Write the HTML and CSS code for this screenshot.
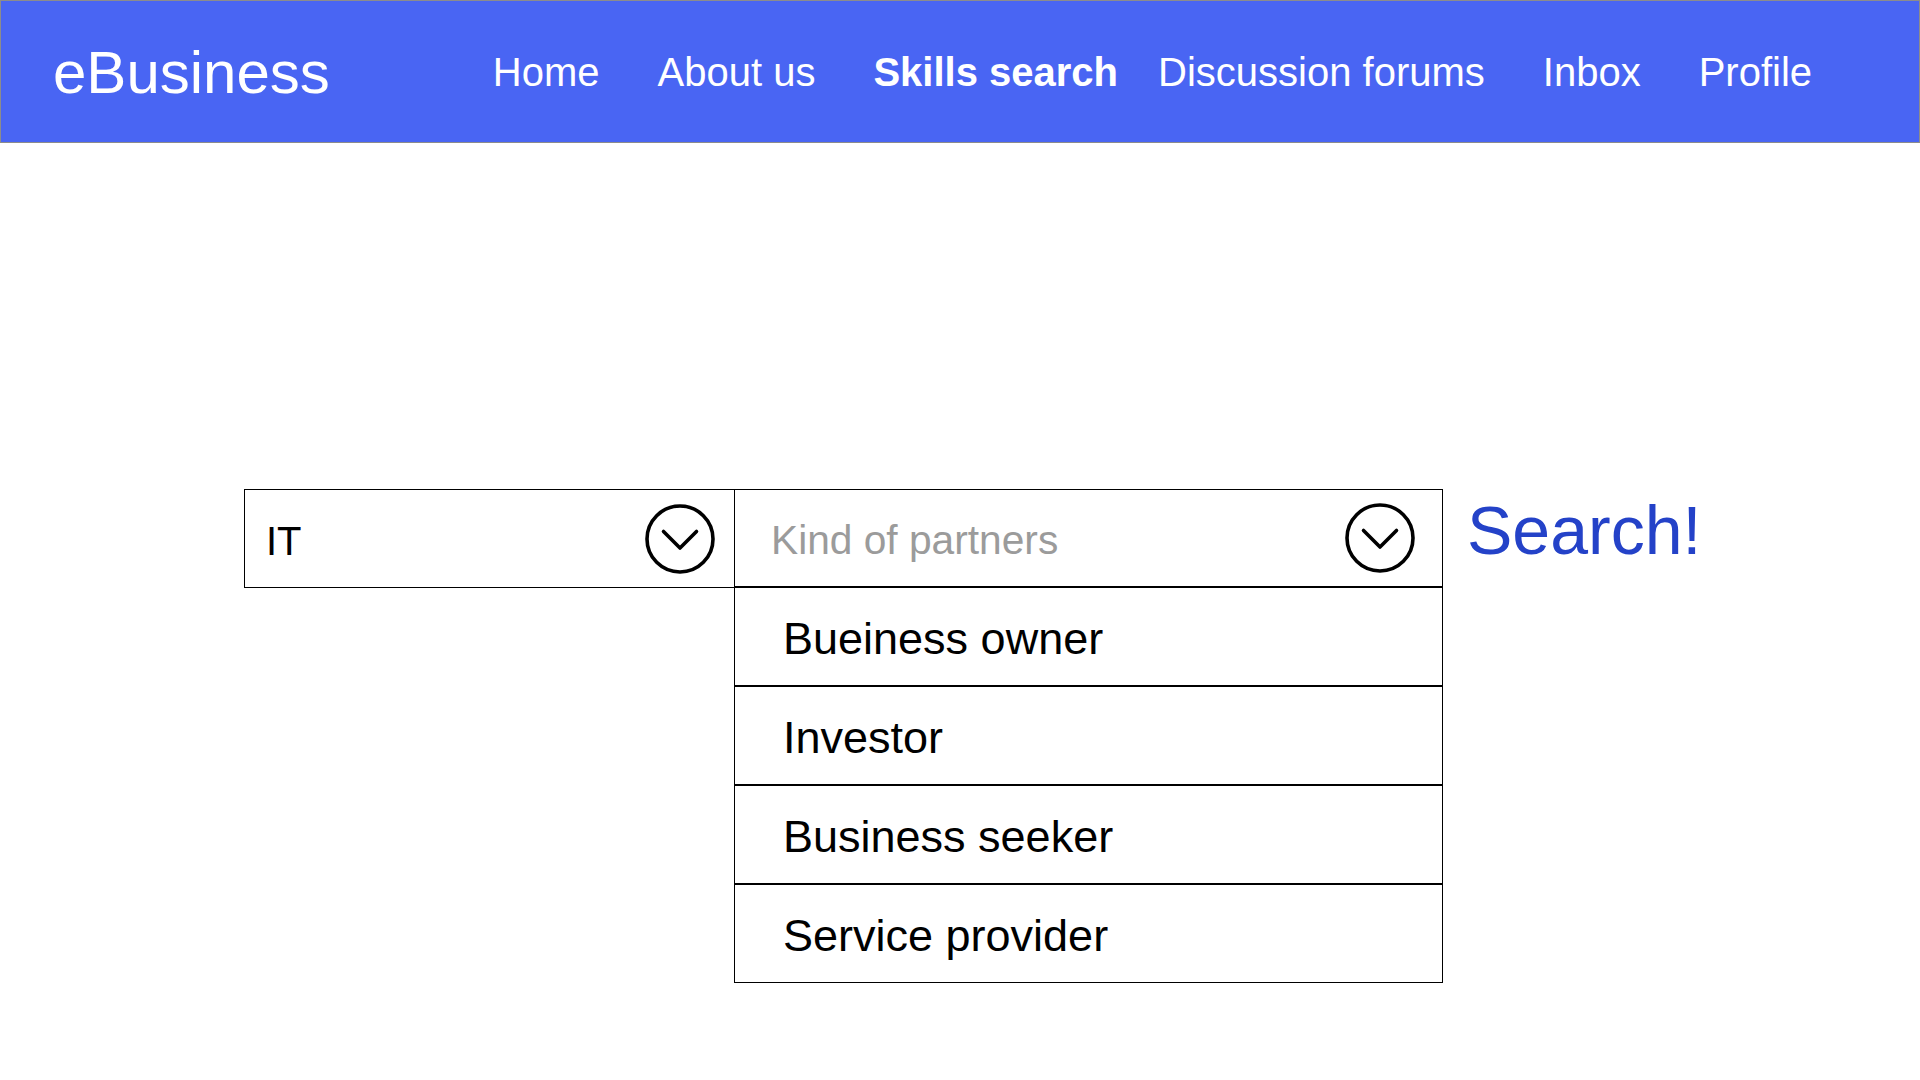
FILE: index.html
```html
<!DOCTYPE html>
<html lang="en">
<head>
<meta charset="utf-8">
<title>eBusiness – Skills search</title>
<link rel="stylesheet" href="styles.css">
</head>
<body>
<header class="topbar">
  <div class="logo">eBusiness</div>
  <nav class="nav">
    <a class="nav-item" href="#">Home</a>
    <a class="nav-item" href="#">About us</a>
    <a class="nav-item nav-item-active" href="#">Skills search</a>
    <a class="nav-item" href="#">Discussion forums</a>
    <a class="nav-item" href="#">Inbox</a>
    <a class="nav-item" href="#">Profile</a>
  </nav>
</header>
<main class="search-area">
  <div class="search-row">
    <div class="select select-sector">
      <span class="select-label">IT</span>
      <svg class="chevron" viewBox="0 0 70 70" width="70" height="70" aria-hidden="true">
        <circle cx="35" cy="35" r="33" fill="none" stroke="#000" stroke-width="3.6"/>
        <polyline points="18.5,27.5 35,44 51.5,27.5" fill="none" stroke="#000" stroke-width="3.6" stroke-linecap="round" stroke-linejoin="round"/>
      </svg>
    </div>
    <div class="partner-col">
      <div class="select select-partner">
        <span class="select-label placeholder">Kind of partners</span>
        <svg class="chevron" viewBox="0 0 70 70" width="70" height="70" aria-hidden="true">
          <circle cx="35" cy="35" r="33" fill="none" stroke="#000" stroke-width="3.6"/>
          <polyline points="18.5,27.5 35,44 51.5,27.5" fill="none" stroke="#000" stroke-width="3.6" stroke-linecap="round" stroke-linejoin="round"/>
        </svg>
      </div>
      <ul class="options">
        <li class="option">Bueiness owner</li>
        <li class="option">Investor</li>
        <li class="option">Business seeker</li>
        <li class="option">Service provider</li>
      </ul>
    </div>
    <a class="search-btn" href="#">Search!</a>
  </div>
</main>
</body>
</html>
```
FILE: styles.css
```css
* {
  box-sizing: border-box;
}

html, body {
  margin: 0;
  padding: 0;
  background: #ffffff;
}

body {
  font-family: "Liberation Sans", Arial, Helvetica, sans-serif;
  color: #000;
  width: 1920px;
  height: 1080px;
  overflow: hidden;
}

.topbar {
  height: 143px;
  background: #4965f3;
  border: 1px solid #8c8c8c;
  display: flex;
  align-items: center;
  padding-left: 52px;
}

.logo {
  color: #ffffff;
  font-size: 60px;
  line-height: 1;
  padding-top: 3px;
}

.nav {
  display: flex;
  align-items: center;
  gap: 58px;
  margin-left: 163px;
}

.nav-item {
  color: #ffffff;
  text-decoration: none;
  font-size: 40px;
  line-height: 1;
}

.nav-item-active {
  font-weight: bold;
  margin-right: -18px;
}

.search-area {
  padding-top: 346px;
  padding-left: 244px;
}

.search-row {
  display: flex;
  align-items: flex-start;
}

.select {
  height: 99px;
  border: 1px solid #000;
  display: flex;
  align-items: center;
  justify-content: space-between;
  background: #fff;
}

.select-sector {
  width: 491px;
  padding-left: 21px;
  padding-right: 19px;
}

.partner-col {
  width: 709px;
  margin-left: -1px;
  display: flex;
  flex-direction: column;
}

.select-partner {
  border-bottom-width: 2px;
  padding-left: 36px;
  padding-right: 27px;
}

.select-label {
  font-size: 40px;
  line-height: 1;
  padding-top: 4px;
}

.placeholder {
  color: #9b9b9b;
  font-size: 40.7px;
}

.chevron {
  display: block;
  flex: none;
}

.options {
  list-style: none;
  margin: 0;
  padding: 0;
  border-left: 1px solid #000;
  border-right: 1px solid #000;
  border-bottom: 1px solid #000;
}

.option {
  height: 99px;
  border-bottom: 2px solid #000;
  display: flex;
  align-items: center;
  padding-left: 48px;
  padding-top: 4px;
  font-size: 45px;
  line-height: 1;
}

.option:last-child {
  border-bottom: none;
  height: 97px;
}

.search-btn {
  margin-left: 24px;
  margin-top: 7px;
  font-size: 68px;
  line-height: 1;
  color: #2442c8;
  text-decoration: none;
}
```
